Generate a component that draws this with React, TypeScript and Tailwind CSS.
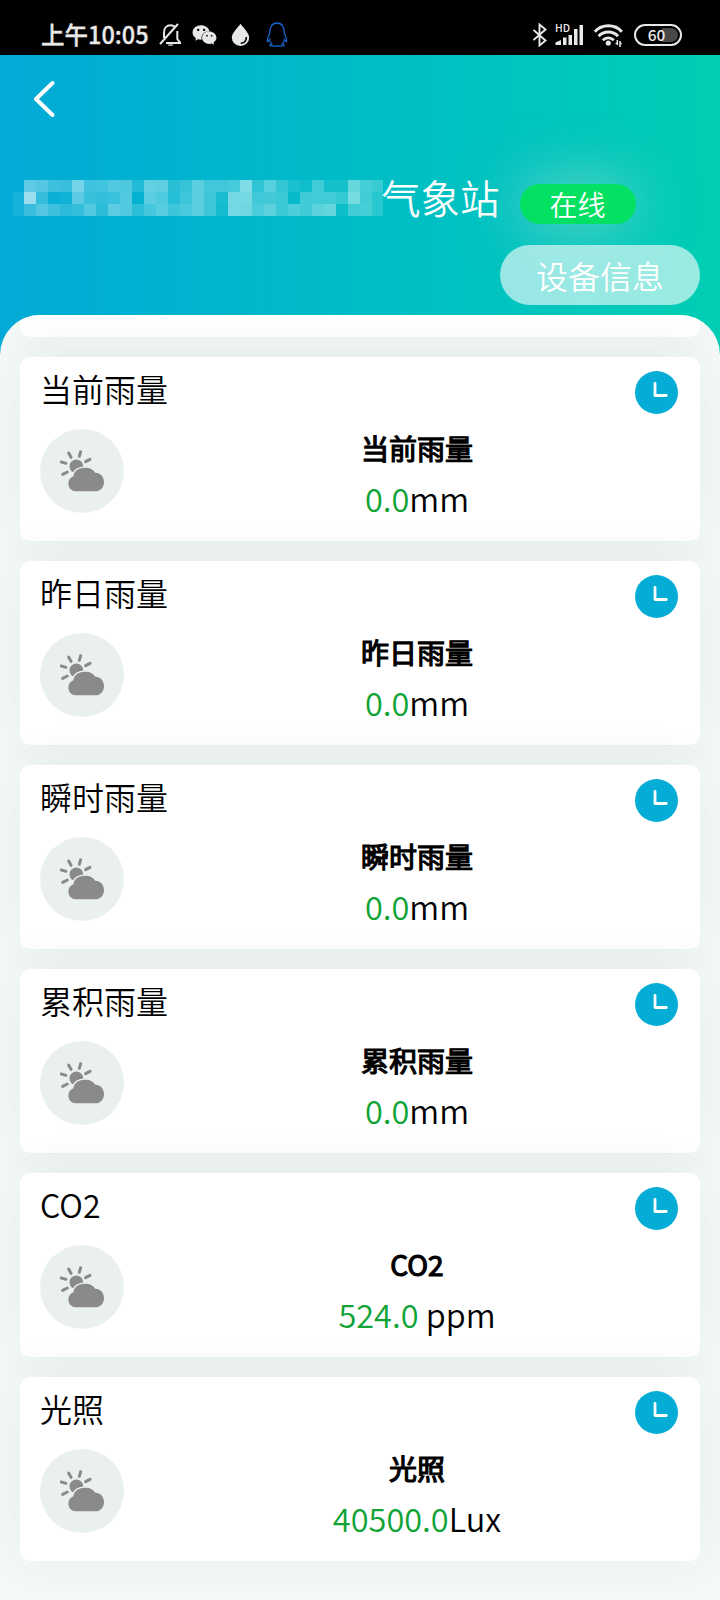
import { FaQq, FaWeixin } from 'react-icons/fa'

type Metric = { name: string; value: string; unit: string }

const metrics: Metric[] = [
  { name: '当前雨量', value: '0.0', unit: 'mm' },
  { name: '昨日雨量', value: '0.0', unit: 'mm' },
  { name: '瞬时雨量', value: '0.0', unit: 'mm' },
  { name: '累积雨量', value: '0.0', unit: 'mm' },
  { name: 'CO2', value: '524.0', unit: ' ppm' },
  { name: '光照', value: '40500.0', unit: 'Lux' },
]

// white opacity (percent) of every block that hides the station name
const maskRows = [
  [37, 33, 24, 22, 46, 25, 25, 32, 30, 13, 39, 37, 16, 22, 36, 25, 25, 28, 50, 18, 34, 20, 10, 6, 25, 8, 8, 40, 27, 22],
  [60, 20, 3, 6, 36, 22, 20, 22, 32, 1, 36, 31, 15, 24, 36, 24, 10, 46, 46, 25, 26, 23, 2, 25, 25, 25, 20, 46, 25, 16],
  [22, 32, 24, 17, 20, 32, 17, 36, 32, 17, 27, 34, 24, 29, 36, 24, 8, 46, 44, 29, 36, 23, 30, 25, 36, 39, 5, 25, 27, 16],
]

function StatusBar() {
  return (
    <div className="flex h-[55px] shrink-0 items-center justify-between bg-black pt-[14px] pr-[38px] pl-[41px] text-[#e8e8e8]">
      <div className="flex items-center">
        <span className="-mt-[2px] w-[118px] text-[23.500px] leading-[30px] font-medium whitespace-nowrap [-webkit-text-stroke:0.3px]">
          上午10:05
        </span>
        <svg className="h-6 w-[22px]" viewBox="0 0 22 24" fill="none" stroke="currentColor" strokeWidth="2">
          <path d="M5 15V9.500C5 5 7.800 2.200 11.500 2.200c2.200 0 3.900.9 5 2.500M18.300 8v8l3 4H7" />
          <path d="M1.500 20.500 18.500 1.500" strokeLinecap="round" />
          <path d="M8.500 21.500h6c-.5 1.800-5.500 1.800-6 0Z" fill="currentColor" stroke="none" />
        </svg>
        <FaWeixin className="ml-[11px] h-6 w-[25px]" />
        <svg className="ml-[14px] h-6 w-[19px]" viewBox="0 0 19 24">
          <path d="M9.500.8C7 4.500.8 10 .8 14.600a8.700 8.400 0 0 0 17.400 0C18.200 10 12 4.500 9.500.8Z" fill="currentColor" />
          <path d="M15.300 14.500c0 3.200-2 5.300-5 5.700" fill="none" stroke="#000" strokeWidth="1.600" strokeLinecap="round" />
        </svg>
        <FaQq className="ml-[15px] h-[23px] w-[24px] overflow-visible fill-none stroke-[#1a66cc] [stroke-width:28]" />
      </div>
      <div className="flex items-center">
        <svg className="h-6 w-4" viewBox="0 0 16 24" fill="none" stroke="currentColor" strokeWidth="1.900">
          <path d="M.5 7 12.500 17.500 6.500 22.500V1.500L12.500 6.500.5 17" />
        </svg>
        <div className="ml-[6px] grid h-6 w-[30px]">
          <span className="col-start-1 row-start-1 -mt-[1px] text-[10.500px] leading-[12px] font-medium">HD</span>
          <svg className="col-start-1 row-start-1 h-6 w-[30px]" viewBox="0 0 30 24" fill="currentColor">
            <path d="M.5 22v-2.500l5.500-2.500v5ZM8 14.500h3.500V22H8ZM13.500 12H17v10h-3.500ZM19 6h3.500v16H19ZM24.500 2H28v20h-3.500Z" />
          </svg>
        </div>
        <svg className="ml-[9px] h-6 w-[30px]" viewBox="0 0 30 24" fill="none" stroke="currentColor" strokeWidth="2.900">
          <path d="M.8 8.800C7.800.8 20.800.8 27.800 8.800M4.600 13.200c5.200-5.600 14.200-5.600 19.400 0M8.800 17.200c3.100-3.100 7.900-3.100 11 0" />
          <circle cx="14.300" cy="20" r="2.600" fill="currentColor" stroke="none" />
          <path d="M23.300 17v5M26 18v6M21.500 20.500h1.800M26 20.500h1.800" strokeWidth="1.500" />
        </svg>
        <div className="ml-[10px] flex h-[22px] w-[48px] items-center rounded-full border-2 border-current p-[2px]">
          <div className="flex h-full w-full items-center justify-center rounded-full bg-linear-to-r from-black from-60% to-[#484848] to-60% pr-[3px] text-[15.500px] leading-none font-medium">
            60
          </div>
        </div>
      </div>
    </div>
  )
}

function StationName() {
  return (
    <div className="flex items-center">
      <div className="mt-[2px] flex h-9">
        <div className="mt-3 h-6 w-[11px] bg-white/8" />
        <div className="grid w-[359px] grid-cols-[repeat(30,12px)] grid-rows-[repeat(3,12px)] overflow-hidden">
          {maskRows.flat().map((alpha, i) => (
            <div key={i} style={{ backgroundColor: `rgb(255 255 255 / ${alpha}%)` }} />
          ))}
        </div>
      </div>
      <h1 className="-ml-[2px] text-[39.500px] leading-[58px] font-[350]">气象站</h1>
      <span className="mt-[13px] ml-[20px] flex h-10 w-[116px] items-center justify-center rounded-full bg-[#04e162] text-[28px] leading-none font-[350] shadow-[0_0_60px_rgba(240,230,225,0.5)]">
        在线
      </span>
    </div>
  )
}

function WeatherIcon() {
  return (
    <svg className="h-[84px] w-[84px] rounded-full bg-[#eaf0ef]" viewBox="120 417 252 252" fill="#8a8a8a">
      <path
        d="M206 489l7 13M242 485l-4 14M270 508l-13 7M184 516l14 4M188 553l14-7"
        stroke="#8a8a8a"
        strokeWidth="9"
        strokeLinecap="round"
      />
      <circle cx="229" cy="529" r="20.500" />
      <path
        d="M229 604a23.500 23.500 0 0 1-9-45.500C222 543 236 533 256 533c14 0 23 5 30 15 15 0 26 12 26 28 0 17-11 28-27 28Z"
        stroke="#eaf0ef"
        strokeWidth="9"
        paintOrder="stroke"
      />
    </svg>
  )
}

function ClockIcon() {
  return (
    <svg className="h-[43px] w-[43px]" viewBox="0 0 43 43">
      <circle cx="21.500" cy="21.500" r="21.500" fill="#05add6" />
      <path d="M20 12.500v12h11.300" fill="none" stroke="#fff" strokeWidth="2.800" strokeLinecap="round" strokeLinejoin="round" />
    </svg>
  )
}

function MetricCard({ name, value, unit }: Metric) {
  return (
    <section className="h-[184px] shrink-0 rounded-[10px] bg-white shadow-[0_0_50px_rgba(0,60,50,0.07)]">
      <div className="flex h-[72px] items-start justify-between pt-[14px] pr-[22px] pl-5">
        <h2 className="-mt-[6px] text-[32px] leading-[46px] font-[350]">{name}</h2>
        <ClockIcon />
      </div>
      <div className="flex pl-5">
        <WeatherIcon />
        <div className="-mt-[1px] ml-[19px] w-[548px] text-center">
          <h3 className="text-[28px] leading-[41px] font-normal [-webkit-text-stroke:1.2px]">{name}</h3>
          <p className="mt-[5px] text-[32.500px] leading-[48px] font-[350] whitespace-pre">
            <span className="text-[#10a336]">{value}</span>
            {unit}
          </p>
        </div>
      </div>
    </section>
  )
}

export default function App() {
  return (
    <div className="flex h-[1600px] w-[720px] flex-col overflow-hidden bg-linear-to-r from-[#04aad7] to-[#02ceb4] font-['Noto_Sans_CJK_SC',sans-serif] text-black">
      <StatusBar />
      <header className="flex h-[260px] shrink-0 flex-col text-white">
        <svg className="mt-6 ml-[30px] h-10 w-7 shrink-0" viewBox="0 0 28 40" fill="none" stroke="currentColor" strokeWidth="4">
          <path d="M22.500 4 6 20 22.500 36" strokeLinecap="round" strokeLinejoin="round" />
        </svg>
        <div className="mt-[49px] ml-[13px]">
          <StationName />
        </div>
        <button className="mt-[19px] mr-5 h-[60px] w-[200px] shrink-0 self-end rounded-full bg-white/60 text-[32px] leading-none font-[350]">
          设备信息
        </button>
      </header>
      <main className="flex flex-1 flex-col gap-5 overflow-hidden rounded-t-[40px] bg-[#f5faf9] px-5">
        <div className="h-[22px] shrink-0 rounded-b-[10px] bg-white shadow-[0_0_50px_rgba(0,60,50,0.07)]" />
        {metrics.map((metric) => (
          <MetricCard key={metric.name} {...metric} />
        ))}
      </main>
    </div>
  )
}
